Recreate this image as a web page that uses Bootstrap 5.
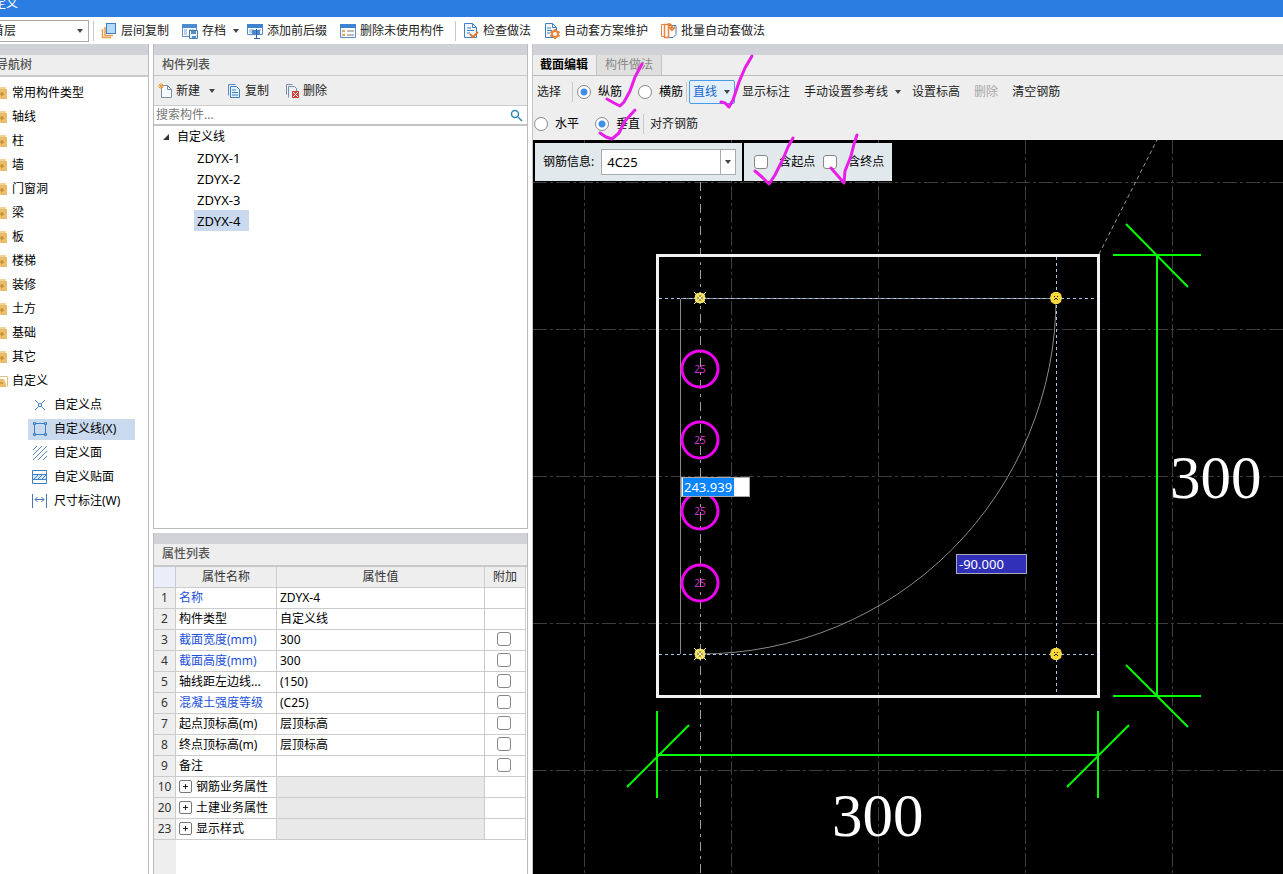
<!DOCTYPE html>
<html lang="zh-CN">
<head>
<meta charset="utf-8">
<meta name="viewport" content="width=device-width, initial-scale=1">
<title>定义</title>
<link href="https://cdn.jsdelivr.net/npm/bootstrap@5.3.0/dist/css/bootstrap.min.css" rel="stylesheet">
<style>
  body { font: 12px/20px "Noto Sans", "Noto Sans CJK SC", sans-serif; color: #000; background: #fff; overflow: hidden; }
  button, input, select { font: inherit; color: inherit; }
  svg { display: block; flex: none; }
  ul { list-style: none; margin: 0; padding: 0; }
  .title-bar { height: 17px; background: #2b7de1; color: #fff; overflow: hidden; }
  .title-bar h1 { font-size: 12px; line-height: 20px; margin: -6px 0 0 -6px; font-weight: 400; }
  .main-bar { height: 27px; color: #222; }
  .main-bar .tools { gap: 13px; margin-left: 7px; }
  .tool { border: 0; background: none; padding: 0; display: flex; align-items: center; gap: 4px; white-space: nowrap; line-height: 20px; color: #222; }
  .tool:disabled { color: #a8a8a8; }
  .caret { width: 0; height: 0; border: 3px solid transparent; border-top: 4px solid #444; border-bottom: 0; flex: none; }
  .tool .caret { margin-left: 3px; }
  .main-bar .with-caret { margin-right: -5px; }
  .bar-rule { width: 1px; height: 20px; background: #c8c8c8; flex: none; }
  .main-bar .bar-rule { margin: 0 -6px 0 -2px; }
  .combo { position: relative; border: 1px solid #aaa; background: #fff; display: flex; align-items: center; }
  .combo select { appearance: none; border: 0; background: none; width: 100%; padding: 0 5px; outline: 0; line-height: 18px; }
  .combo .caret { position: absolute; right: 5px; pointer-events: none; }
  .floor-combo { width: 99px; height: 22px; margin-left: -10px; }
  .floor-combo select { padding-left: 1px; }
  .panel-top { height: 11px; background: #d1d2d8; flex: none; }
  .panel-head { height: 22px; background: #eee; border-bottom: 2px solid #c9c9c9; color: #555; font-size: 12px; line-height: 20px; margin: 0; flex: none; }
  .nav-col .panel-head { text-indent: -4px; }
  .upper .panel-head { height: 21px; border-bottom-width: 1px; }
  .lower .panel-head { height: 23px; }
  .nav-col { width: 149px; border-right: 1px solid #bbb; overflow: hidden; flex: none; }
  .mid-col { width: 375px; margin: 0 4px; flex: none; gap: 4px; }
  .side { border: solid #bbb; border-width: 0 1px 1px; }
  .upper { flex: 485 1 0; }
  .lower { flex: 342 1 0; border-bottom: 0; }
  .nav-list > li > a { display: flex; align-items: center; height: 24px; gap: 4px; }
  a, a:hover { color: #000; text-decoration: none; }
  .sub-list li { height: 24px; padding-left: 28px; display: flex; align-items: center; }
  .sub-list a { display: flex; align-items: center; gap: 6px; width: 107px; height: 21px; padding-left: 4px; }
  .chosen { background: #c9d9ee; }
  .list-tools { height: 30px; background: #eee; border-bottom: 1px solid #ccc; flex: none; }
  .list-tools .tool .caret { margin-left: 5px; }
  .search { height: 20px; border-bottom: 2px solid #c4c4c4; flex: none; }
  .search input { border: 0; outline: 0; padding: 0 2px; line-height: 16px; }
  .search input::placeholder { color: #777; }
  .tree a { display: flex; align-items: center; height: 21px; }
  .tree ul { padding-left: 40px; font-size: 13px; }
  .tree ul a { width: 55px; padding-left: 3px; }
  .props { table-layout: fixed; width: 372px; border-collapse: separate; border-spacing: 0; margin: 0; }
  .props th, .props td { height: 21px; padding: 0 0 0 3px; border: solid #ccc; border-width: 0 1px 1px 0; line-height: 20px; white-space: nowrap; overflow: hidden; font-weight: 400; }
  .props thead th { background: #eee; text-align: center; padding: 0; color: #333; }
  .props thead tr > :first-child { background: #e9eef8; }
  .props tbody th { background: #eee; text-align: center; padding: 0; color: #333; }
  .props td:last-child { padding: 2px 2px 0 0; vertical-align: top; }
  .props td.key { color: #1c50d8; }
  .props td.blank { background: #e9e9e9; }
  .gutter { width: 22px; background: #eee; }
  .form-check-input[type] { width: 14px; height: 14px; margin: 0; border: 1px solid #888; background-color: #fff; flex: none; display: block; }
  .form-check-input[type=checkbox] { border-radius: 3px; }
  .form-check-input[type=radio]:checked { background-image: radial-gradient(circle, #3f8ee8 3px, transparent 4px); }
  .expand { width: 13px; height: 13px; border: 1px solid #777; border-radius: 2px; background: #fff; padding: 2px; flex: none; }
  .edit-col { min-width: 0; border-left: 1px solid #c4c4c4; background: #eee; position: relative; }
  .tabs { height: 21px; border-bottom: 1px solid #bbb; }
  .tabs button { border: 0; background: none; padding: 0 8px; line-height: 20px; }
  .tabs .on { font-weight: 700; padding-left: 7px; }
  .tabs .off { background: #dfdfdf; color: #888; border: solid #c4c4c4; border-width: 0 1px; }
  .row-tools { height: 31px; padding-left: 4px; }
  .row-tools.axis-row { height: 33px; padding-left: 1px; }
  .row-tools label, .float-box label { display: flex; align-items: center; white-space: nowrap; gap: 7px; }
  .rule-wide { margin: 0 4px 0 11px; }
  .rule-tight { margin: 0 2px 0 3px; }
  .gap-l { margin-left: 14px; }
  .gap-m { margin-left: 11px; }
  .gap-s { margin-left: 7px; }
  .line-btn { border: 1px solid #4a9be8; border-radius: 2px; background: #e3f0fc; color: #1464c8; height: 24px; padding: 0 4px 0 3px; }
  .canvas { background: #000; position: relative; min-height: 0; overflow: hidden; }
  .float-bar { position: absolute; left: 2px; top: 3px; gap: 2px; }
  .float-box { background: #e1e9ec; height: 38px; padding: 0 6px 0 8px; gap: 7px; }
  .float-box.ends { padding: 0 8px 0 10px; gap: 8px; }
  .float-box.ends label { gap: 11px; }
  .float-box .combo { width: 135px; height: 26px; font-size: 13px; }
  .float-box .combo .caret { right: 4px; }
  .float-box .combo::after { content: ""; position: absolute; right: 14px; top: 0; bottom: 0; border-left: 1px solid #aaa; }
  .len-input { position: absolute; left: 148px; top: 337px; width: 69px; height: 20px; border: 1px solid #aaa; background: linear-gradient(90deg, #fff 1px, #0a84ff 1px, #0a84ff 52px, #fff 52px); color: #fff; padding: 0 2px; font-size: 13px; border-radius: 0; outline: 0; }
  .angle-input { position: absolute; left: 423px; top: 414px; width: 71px; height: 20px; border: 1px solid #aab; background: #3030b8; color: #fff; padding: 0 2px; font-size: 13px; outline: 0; }
  .marks { position: absolute; left: 0; top: 0; pointer-events: none; }
  .dim { font: 61px "Liberation Serif", serif; fill: #fff; }
  .bar-no { font: 10px "Noto Sans", sans-serif; fill: #d030d0; text-anchor: middle; }
</style>
<script src="https://cdn.jsdelivr.net/npm/bootstrap@5.3.0/dist/js/bootstrap.bundle.min.js"></script>
</head>
<body class="vh-100 d-flex flex-column">
<svg width="0" height="0" class="position-absolute" aria-hidden="true">
  <symbol id="folder" viewBox="0 0 8 14"><path d="M0 1h6v2H0z" fill="#f2d49b"/><path d="M0 3h7v10H0z" fill="#e9bd6c"/><path d="M0 8h4M2 6v4" stroke="#b98320" fill="none"/></symbol>
  <symbol id="plus" viewBox="0 0 7 7"><path d="M1 3.500h5M3.500 1v5" stroke="#222"/></symbol>
  <symbol id="knot" viewBox="0 0 12 12"><path d="M3 1h6l2 2v6l-2 2H3L1 9V3z" fill="#f0d850"/><path d="M0 0l12 12M12 0L0 12M6 0v12M0 6h12" stroke="#fff6b0" stroke-width="1"/><path d="M3 6h2M7 6h2M6 3v2M6 7v2" stroke="#5a4a10"/></symbol>
  <symbol id="ring" viewBox="0 0 12 12"><path d="M4 0h4l3 2 1 4-1 4-3 2H4l-3-2-1-4 1-4z" fill="#f4d83c"/><path d="M4 4h1v1H4zM7 4h1v1H7zM4 7h1v1H4zM7 7h1v1H7zM5 6h2v1H5z" fill="#221a00"/></symbol>
</svg>

<header class="title-bar flex-shrink-0"><h1>定义</h1></header>

<div class="main-bar d-flex align-items-center flex-shrink-0">
  <div class="combo floor-combo flex-shrink-0"><select aria-label="楼层"><option>首层</option></select><span class="caret"></span></div>
  <span class="bar-rule ms-1 me-0"></span>
  <div class="tools d-flex align-items-center">
    <button class="tool" type="button"><svg width="16" height="16"><path d="M1.500 6v8.500H10M4 4v8.500h8" fill="none" stroke="#e89a50" stroke-width="1.500"/><rect x="5.500" y=".5" width="9" height="10" fill="#b5daf8" stroke="#3f7fc4"/></svg>层间复制</button>
    <button class="tool with-caret" type="button"><svg width="16" height="16"><path d="M.5 1.500h14v12H.5z" fill="#fff" stroke="#5a8cc8"/><path d="M0 1h15v4H0z" fill="#4d8ad0"/><path d="M2 7h3M2 9h3M2 11h3M7 7h6" stroke="#7aa0cc"/><path d="M7.500 7.500h8v8h-8z" fill="#eaf2fb" stroke="#4a7ab4"/><path d="M9 8h5v3H9zM10 13h4v2h-4z" fill="#5a8cc8"/></svg>存档<span class="caret"></span></button>
    <button class="tool" type="button"><svg width="16" height="16"><path d="M.5 1.500h15v10H.5z" fill="#fff" stroke="#5a8cc8"/><path d="M0 1h16v4H0z" fill="#3f82d0"/><path d="M2 7h5M2 9h4M11 7h3" stroke="#7aa0cc"/><path d="M5 7h8v5H5z" fill="#4d8ad0"/><path d="M9.500 6v9M7 15.500h6" stroke="#2d62a8"/></svg>添加前后缀</button>
    <button class="tool" type="button"><svg width="16" height="16"><path d="M.5 1.500h15v13H.5z" fill="#fff" stroke="#5a8cc8"/><path d="M0 1h16v4H0z" fill="#3f82d0"/><path d="M2 7l3 2M5 7L2 9M2 11l3 2M5 11l-3 2" stroke="#e09040"/><path d="M7 8h7M7 12h7" stroke="#777"/></svg>删除未使用构件</button>
    <span class="bar-rule"></span>
    <button class="tool" type="button"><svg width="16" height="16"><path d="M1.500.5h8l4 4v10h-12z" fill="#f3f8fe" stroke="#3f7fc4"/><path d="M9.500.5v4h4M4 5h4M4 7.500h7M4 10h3" fill="none" stroke="#3f7fc4"/><path d="M7 11l3 3 5-5" fill="none" stroke="#e07830" stroke-width="2"/></svg>检查做法</button>
    <button class="tool" type="button"><svg width="16" height="16"><path d="M1.500.5h7l4 4v10h-11z" fill="#f3f8fe" stroke="#3f7fc4"/><path d="M8.500.5v4h4M3 5h4M3 7.500h5M3 10h3" fill="none" stroke="#3f7fc4"/><circle cx="11" cy="11" r="3" fill="#fff" stroke="#e8843c" stroke-width="2"/><path d="M11 6v2M11 14v2M6.500 8.500L8 10M14 12l1.500 1.500M6.500 13.500L8 12M14 10l1.500-1.500" stroke="#e8843c" stroke-width="2"/></svg>自动套方案维护</button>
    <button class="tool" type="button"><svg width="16" height="16"><path d="M7 2.500h8v9l-3 3H7z" fill="#fff" stroke="#3f7fc4"/><path d="M.5 1.500h3v12h-3z" fill="#fff" stroke="#e8843c"/><path d="M3.500 1.500h4v13h-4z" fill="#fff" stroke="#e8843c" stroke-width="1.500"/><path d="M7 1c3 0 4 1 4 4M8 4l3 3 3-3" fill="none" stroke="#e8843c" stroke-width="2"/></svg>批量自动套做法</button>
  </div>
</div>

<main class="d-flex flex-grow-1 overflow-hidden">
  <nav class="nav-col">
    <div class="panel-top"></div>
    <h2 class="panel-head">导航树</h2>
    <ul class="nav-list pt-1">
      <li><a href="#"><svg width="8" height="14"><use href="#folder"/></svg>常用构件类型</a></li>
      <li><a href="#"><svg width="8" height="14"><use href="#folder"/></svg>轴线</a></li>
      <li><a href="#"><svg width="8" height="14"><use href="#folder"/></svg>柱</a></li>
      <li><a href="#"><svg width="8" height="14"><use href="#folder"/></svg>墙</a></li>
      <li><a href="#"><svg width="8" height="14"><use href="#folder"/></svg>门窗洞</a></li>
      <li><a href="#"><svg width="8" height="14"><use href="#folder"/></svg>梁</a></li>
      <li><a href="#"><svg width="8" height="14"><use href="#folder"/></svg>板</a></li>
      <li><a href="#"><svg width="8" height="14"><use href="#folder"/></svg>楼梯</a></li>
      <li><a href="#"><svg width="8" height="14"><use href="#folder"/></svg>装修</a></li>
      <li><a href="#"><svg width="8" height="14"><use href="#folder"/></svg>土方</a></li>
      <li><a href="#"><svg width="8" height="14"><use href="#folder"/></svg>基础</a></li>
      <li><a href="#"><svg width="8" height="14"><use href="#folder"/></svg>其它</a></li>
      <li><a href="#"><svg width="8" height="14"><path d="M0 2.500h7.500V12" fill="#fff" stroke="#e0c080"/><path d="M0 5h4l3 8H0z" fill="#e9bd6c"/><path d="M0 9h3" stroke="#b98320"/></svg>自定义</a>
        <ul class="sub-list">
          <li><a href="#"><svg width="16" height="16" fill="none" stroke="#4a86c8"><path d="M6.500 6.500h3v3h-3zM3 3l3.500 3.500M13 3L9.500 6.500M3 13l3.500-3.500M13 13L9.500 9.500"/></svg>自定义点</a></li>
          <li><a href="#" class="chosen"><svg width="16" height="16" fill="none" stroke="#3f7fc4"><path d="M2.500 2.500h11v11h-11z"/><path d="M1.500 1.500h2v2h-2zM12.500 1.500h2v2h-2zM1.500 12.500h2v2h-2zM12.500 12.500h2v2h-2z" fill="#8bb8e8"/></svg>自定义线(X)</a></li>
          <li><a href="#"><svg width="16" height="16" fill="none" stroke="#5a86b8"><path d="M1 5l4-4M1 10l9-9M1 15L15 1M6 15l9-9M11 15l4-4"/></svg>自定义面</a></li>
          <li><a href="#"><svg width="16" height="16" fill="none" stroke="#3f7fc4"><path d="M.5 1.500h14v13H.5z"/><path d="M.5 5.500h14v5H.5z" fill="#d5e6f8"/><path d="M2 10l4-4M6 10l4-4M10 10l4-4"/></svg>自定义贴面</a></li>
          <li><a href="#"><svg width="16" height="16" fill="none" stroke="#4a76b0"><path d="M.5 1v14M14.500 1v14M3 6.500h9M5.500 4L3 6.500 5.500 9M9.500 4L12 6.500 9.500 9"/></svg>尺寸标注(W)</a></li>
        </ul>
      </li>
    </ul>
  </nav>

  <div class="mid-col d-flex flex-column">
    <section class="side upper d-flex flex-column">
      <div class="panel-top"></div>
      <h2 class="panel-head ps-2">构件列表</h2>
      <div class="list-tools d-flex align-items-center ps-1 gap-2">
        <button class="tool me-1" type="button"><svg width="14" height="16"><path d="M3.500 2.500h6l4 4v8h-10z" fill="#f6f9fd" stroke="#7a8ca8"/><path d="M9.500 2.500v4h4" fill="none" stroke="#7a8ca8"/><path d="M0 3h6M3 0v6M1 1l4 4M5 1L1 5" stroke="#f0a030"/></svg>新建<span class="caret"></span></button>
        <button class="tool me-1" type="button"><svg width="14" height="16"><path d="M1.500 12.500v-11h7" fill="none" stroke="#5a8cc8"/><path d="M3.500 3.500h6l3 3v8h-9z" fill="#e6f0fb" stroke="#3f7fc4"/><path d="M5 7h4M5 9.500h6M5 12h6" stroke="#3f7fc4"/></svg>复制</button>
        <button class="tool ms-1" type="button"><svg width="14" height="16"><path d="M1.500 11.500v-10h6M3.500 14.500v-11h6l2 2v4" fill="none" stroke="#7a8ca8"/><path d="M7 8h7v7H7z" fill="#d0403c"/><path d="M8 9l5 5M13 9l-5 5" stroke="#fff"/></svg>删除</button>
      </div>
      <div class="search d-flex align-items-center">
        <input class="flex-grow-1" type="text" placeholder="搜索构件..." aria-label="搜索构件">
        <svg class="me-1" width="14" height="14" fill="none" stroke="#2f86b4" stroke-width="1.500"><circle cx="6" cy="6" r="3.500"/><path d="M9 9l4 4"/></svg>
      </div>
      <ul class="tree">
        <li><a href="#" class="ps-2"><svg class="me-2" width="7" height="8"><path d="M7 1v6H1z" fill="#333"/></svg>自定义线</a>
          <ul>
            <li><a href="#">ZDYX-1</a></li>
            <li><a href="#">ZDYX-2</a></li>
            <li><a href="#">ZDYX-3</a></li>
            <li><a href="#" class="chosen">ZDYX-4</a></li>
          </ul>
        </li>
      </ul>
    </section>

    <section class="side lower d-flex flex-column">
      <div class="panel-top"></div>
      <h2 class="panel-head ps-2">属性列表</h2>
      <table class="props">
        <colgroup><col style="width:22px"><col style="width:101px"><col style="width:208px"><col style="width:41px"></colgroup>
        <thead><tr><td></td><th>属性名称</th><th>属性值</th><th>附加</th></tr></thead>
        <tbody>
          <tr><th>1</th><td class="key">名称</td><td>ZDYX-4</td><td></td></tr>
          <tr><th>2</th><td>构件类型</td><td>自定义线</td><td></td></tr>
          <tr><th>3</th><td class="key">截面宽度(mm)</td><td>300</td><td><input class="form-check-input mx-auto" type="checkbox" aria-label="附加 截面宽度"></td></tr>
          <tr><th>4</th><td class="key">截面高度(mm)</td><td>300</td><td><input class="form-check-input mx-auto" type="checkbox" aria-label="附加 截面高度"></td></tr>
          <tr><th>5</th><td>轴线距左边线...</td><td>(150)</td><td><input class="form-check-input mx-auto" type="checkbox" aria-label="附加 轴线距左边线"></td></tr>
          <tr><th>6</th><td class="key">混凝土强度等级</td><td>(C25)</td><td><input class="form-check-input mx-auto" type="checkbox" aria-label="附加 混凝土强度等级"></td></tr>
          <tr><th>7</th><td>起点顶标高(m)</td><td>层顶标高</td><td><input class="form-check-input mx-auto" type="checkbox" aria-label="附加 起点顶标高"></td></tr>
          <tr><th>8</th><td>终点顶标高(m)</td><td>层顶标高</td><td><input class="form-check-input mx-auto" type="checkbox" aria-label="附加 终点顶标高"></td></tr>
          <tr><th>9</th><td>备注</td><td></td><td><input class="form-check-input mx-auto" type="checkbox" aria-label="附加 备注"></td></tr>
          <tr><th>10</th><td><div class="d-flex align-items-center"><button class="expand me-1" type="button" aria-label="展开"><svg width="7" height="7"><use href="#plus"/></svg></button>钢筋业务属性</div></td><td class="blank"></td><td></td></tr>
          <tr><th>20</th><td><div class="d-flex align-items-center"><button class="expand me-1" type="button" aria-label="展开"><svg width="7" height="7"><use href="#plus"/></svg></button>土建业务属性</div></td><td class="blank"></td><td></td></tr>
          <tr><th>23</th><td><div class="d-flex align-items-center"><button class="expand me-1" type="button" aria-label="展开"><svg width="7" height="7"><use href="#plus"/></svg></button>显示样式</div></td><td class="blank"></td><td></td></tr>
        </tbody>
      </table>
      <div class="gutter flex-grow-1"></div>
    </section>
  </div>

  <section class="edit-col flex-grow-1 d-flex flex-column">
    <div class="panel-top"></div>
    <div class="tabs d-flex flex-shrink-0">
      <button class="on" type="button">截面编辑</button><button class="off" type="button">构件做法</button>
    </div>
    <div class="row-tools d-flex align-items-center flex-shrink-0">
      <button class="tool" type="button">选择</button>
      <span class="bar-rule rule-wide"></span>
      <label><input class="form-check-input" type="radio" name="dir" checked>纵筋</label>
      <label class="ms-3"><input class="form-check-input" type="radio" name="dir">横筋</label>
      <span class="bar-rule rule-tight"></span>
      <button class="tool line-btn" type="button">直线<span class="caret"></span></button>
      <button class="tool gap-s" type="button">显示标注</button>
      <button class="tool gap-l" type="button">手动设置参考线<span class="caret"></span></button>
      <button class="tool gap-m" type="button">设置标高</button>
      <button class="tool gap-l" type="button" disabled>删除</button>
      <button class="tool gap-l" type="button">清空钢筋</button>
    </div>
    <div class="row-tools axis-row d-flex align-items-center flex-shrink-0">
      <label><input class="form-check-input" type="radio" name="axis">水平</label>
      <label class="ms-3"><input class="form-check-input" type="radio" name="axis" checked>垂直</label>
      <span class="bar-rule rule-tight"></span>
      <button class="tool ms-1" type="button">对齐钢筋</button>
    </div>
    <div class="canvas flex-grow-1">
      <svg width="100%" height="100%" viewBox="533 140 750 734" preserveAspectRatio="xMinYMin slice" fill="none">
        <g stroke="#3c3c3c" stroke-dasharray="14 3 3 3">
          <path d="M584.500 140v734M731.500 140v734M878.500 140v734M1025.500 140v734M1172.500 140v734M533 182.500h750M533 329.500h750M533 476.500h750M533 623.500h750M533 770.500h750"/>
        </g>
        <path d="M700.500 182v692" stroke="#a0a0a0" stroke-dasharray="9 5 3 5"/>
        <path d="M1099 254l58-114" stroke="#999" stroke-dasharray="4 3"/>
        <path d="M657.500 255.500h441v441h-441z" stroke="#f2f2f2" stroke-width="3"/>
        <path d="M681 298.500h375M680.500 299v355M1056 298A356 356 0 0 1 700 654" stroke="#8a8a8a"/>
        <path d="M659 298.500h439M659 654.500h439M1056.500 257v438" stroke="#a9c6ee" stroke-dasharray="3 3"/>
        <g stroke="#f000f0" stroke-width="3"><circle cx="700" cy="369" r="18"/><circle cx="700" cy="440" r="18"/><circle cx="700" cy="511" r="18"/><circle cx="700" cy="583" r="18"/></g>
        <text class="bar-no" x="700" y="373">25</text><text class="bar-no" x="700" y="444">25</text><text class="bar-no" x="700" y="515">25</text><text class="bar-no" x="700" y="587">25</text>
        <use href="#knot" x="694" y="292" width="12" height="12"/><use href="#knot" x="694" y="648" width="12" height="12"/>
        <use href="#ring" x="1050" y="292" width="12" height="12"/><use href="#ring" x="1050" y="648" width="12" height="12"/>
        <path d="M1157 255v441M1113 255h88M1113 696h88M1126 224l62 63M1126 665l62 62M657 755h441M657 711v87M1098 711v87M689 725l-62 62M1129 725l-62 62" stroke="#0f0" stroke-width="2"/>
        <text class="dim" x="1170" y="498">300</text>
        <text class="dim" x="832" y="836">300</text>
      </svg>
      <div class="float-bar d-flex">
        <div class="float-box d-flex align-items-center">
          <label for="rebar">钢筋信息:</label>
          <div class="combo"><select id="rebar"><option>4C25</option></select><span class="caret"></span></div>
        </div>
        <div class="float-box ends d-flex align-items-center">
          <label><input class="form-check-input" type="checkbox">含起点</label>
          <label><input class="form-check-input" type="checkbox">含终点</label>
        </div>
      </div>
      <input class="len-input" type="text" value="243.939" aria-label="长度">
      <input class="angle-input" type="text" value="-90.000" aria-label="角度">
    </div>
    <svg class="marks" width="360" height="160" viewBox="533 44 360 160" fill="none" stroke="#e81ee8" stroke-width="3" stroke-linecap="round" stroke-linejoin="round">
      <path d="M607 99l7 4 6 3 4-4 6-11 5-14 7-13"/>
      <path d="M721 102l4 1 4 4 4-7 6-18 6-14 7-12"/>
      <path d="M600 133l6 4 6 2 7-6 6-12 10-11"/>
      <path d="M755 171l7 6 7 7 6-9 8-16 5-12 5-9"/>
      <path d="M831 168l7 8 6 7 1-12 6-15 3-12 3-9"/>
    </svg>
  </section>
</main>
</body>
</html>
